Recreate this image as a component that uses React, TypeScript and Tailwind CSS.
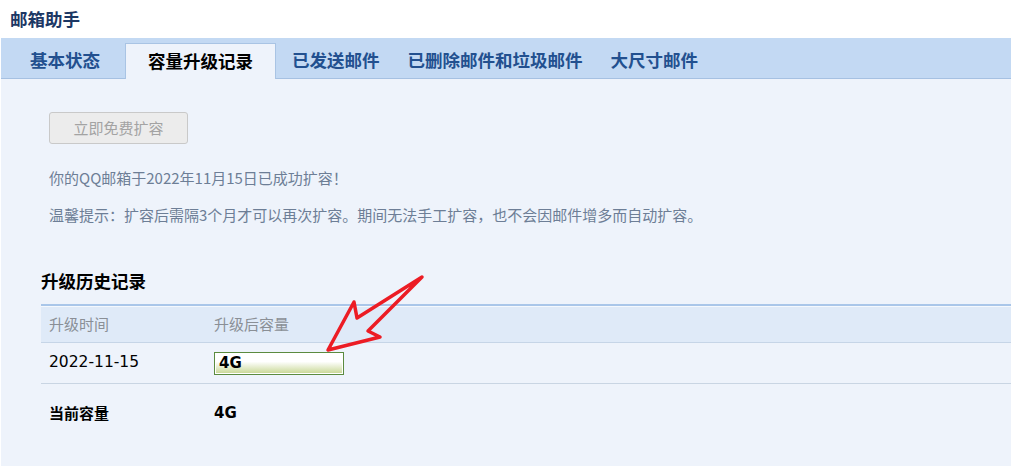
import React from 'react';

const tabs = ['基本状态', '容量升级记录', '已发送邮件', '已删除邮件和垃圾邮件', '大尺寸邮件'];

const Arrow = () => (
  <svg className="absolute left-0 top-0 pointer-events-none" width="1011" height="466" viewBox="0 0 1011 466">
    <polygon
      points="422,277 357,318 354,302 328,350 380,337 368,331"
      fill="none"
      stroke="#ec1c24"
      strokeWidth="3.5"
      strokeLinejoin="round"
      strokeLinecap="round"
    />
  </svg>
);

const App = () => {
  return (
    <div className="relative w-[1011px] h-[466px] overflow-hidden bg-white font-['Noto_Sans_CJK_SC',sans-serif]">
      {/* title */}
      <div className="h-[38px] pl-[10px] flex items-center text-[17.5px] font-bold text-[#1c3764] leading-none">
        邮箱助手
      </div>

      <div className="ml-[1px]">
        {/* tab bar */}
        <div className="h-[41px] bg-[#c3d9f3] border-b border-[#a6c1e2] flex items-end pl-[15px]">
          {tabs.map((t, i) =>
            i === 1 ? (
              <div
                key={t}
                className="ml-[11px] -mb-[1px] h-[36px] w-[151px] flex items-center justify-center bg-[#eef3fb] border border-b-0 border-[#a9c4e4] text-[17.5px] font-bold text-black"
              >
                {t}
              </div>
            ) : (
              <div
                key={t}
                className={`h-[36px] flex items-center px-[14px] text-[17.5px] font-bold text-[#22508f] ${i === 2 ? 'ml-[2px]' : ''}`}
              >
                {t}
              </div>
            )
          )}
        </div>

        {/* content */}
        <div className="h-[387px] bg-[#eef3fb]">
          <div className="pl-[48px] pt-[33px]">
            <button className="h-[32px] w-[139px] rounded-[3px] border border-[#c9c9c9] bg-[#ececec] text-[15px] text-[#a3a3a3]">
              立即免费扩容
            </button>
            <p className="mt-[24px] text-[15px] leading-[20px] text-[#6d7e96]">你的QQ邮箱于2022年11月15日已成功扩容！</p>
            <p className="mt-[17px] text-[15px] leading-[20px] text-[#6d7e96]">
              温馨提示：扩容后需隔3个月才可以再次扩容。期间无法手工扩容，也不会因邮件增多而自动扩容。
            </p>
          </div>

          <div className="pl-[40px] mt-[44px]">
            <h2 className="text-[17.5px] leading-[24px] font-bold text-black">升级历史记录</h2>
            <div className="mt-[11px]">
              <div className="h-[39px] flex items-center bg-[#dfeaf8] border-t-2 border-b border-t-[#a9c6e9] border-b-[#c6d5e7] shadow-[inset_0_1px_0_#f4f8fd] text-[15px] text-[#8a8f96]">
                <div className="w-[173px] pl-[8px]">升级时间</div>
                <div>升级后容量</div>
              </div>
              <div className="h-[41px] flex items-center border-b border-[#c9d5e3]">
                <div className="w-[173px] pl-[8px] font-['DejaVu_Sans',sans-serif] text-[15.5px] text-black">2022-11-15</div>
                <div className="relative h-[23px] w-[130px] border border-[#5b8b3f] bg-white p-[1px]">
                  <div className="h-full w-full bg-gradient-to-b from-white from-40% to-[#cbd999]" />
                  <span className="absolute left-[4px] top-0 h-full flex items-center font-['DejaVu_Sans',sans-serif] text-[15px] font-bold text-black">
                    4G
                  </span>
                </div>
              </div>
              <div className="h-[58px] flex items-center text-[15px] font-bold text-black">
                <div className="w-[173px] pl-[8px]">当前容量</div>
                <div className="font-['DejaVu_Sans',sans-serif]">4G</div>
              </div>
            </div>
          </div>
        </div>
      </div>

      <Arrow />
    </div>
  );
};

export default App;
